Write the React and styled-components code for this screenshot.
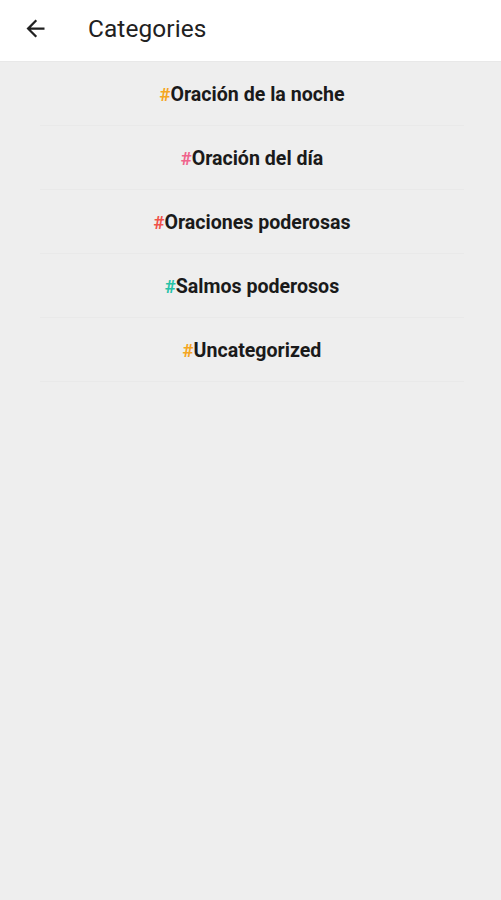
import React from "react";
import styled, { createGlobalStyle } from "styled-components";

const Global = createGlobalStyle`
  html, body {
    margin: 0;
    padding: 0;
    background: #eeeeee;
    font-family: Roboto, "Liberation Sans", sans-serif;
  }
`;

const Page = styled.div`
  min-height: 900px;
  background: #eeeeee;
`;

const Header = styled.header`
  height: 62px;
  padding-bottom: 5px;
  background: #ffffff;
  display: flex;
  align-items: center;
  border-bottom: 1px solid #e8e8e8;
  box-sizing: border-box;
`;

const BackButton = styled.button`
  width: 70px;
  height: 56px;
  border: none;
  background: transparent;
  display: flex;
  align-items: center;
  justify-content: center;
  padding: 0;
  color: #212121;
`;

const Title = styled.h1`
  margin: 0 0 0 18px;
  font-size: 24.4px;
  font-weight: 400;
  color: #212121;
  letter-spacing: 0.1px;
`;

const List = styled.ul`
  list-style: none;
  margin: 0;
  padding: 0;
`;

const Row = styled.li`
  height: 64px;
  padding-top: 2px;
  margin: 0 37px 0 40px;
  display: flex;
  align-items: center;
  justify-content: center;
  border-bottom: 1px solid #e9e9e9;
  box-sizing: border-box;
  font-size: 19.6px;
  font-weight: 700;
  color: #1a1a1a;
`;

const Hash = styled.span`
  color: ${(p) => p.$color};
  font-weight: 700;
  font-size: 18.5px;
`;

const categories = [
  { name: "Oración de la noche", color: "#f5a623" },
  { name: "Oración del día", color: "#f0648c" },
  { name: "Oraciones poderosas", color: "#f0524a" },
  { name: "Salmos poderosos", color: "#26c2a8" },
  { name: "Uncategorized", color: "#f5a623" },
];

const App = () => {
  return (
    <Page>
      <Global />
      <Header>
        <BackButton aria-label="Back">
          <svg width="27" height="27" viewBox="0 0 24 24">
            <path
              d="M20 11H7.83l5.59-5.59L12 4l-8 8 8 8 1.41-1.41L7.83 13H20v-2z"
              fill="#212121"
            />
          </svg>
        </BackButton>
        <Title>Categories</Title>
      </Header>
      <List>
        {categories.map((c) => (
          <Row key={c.name}>
            <Hash $color={c.color}>#</Hash>
            {c.name}
          </Row>
        ))}
      </List>
    </Page>
  );
};

export default App;
